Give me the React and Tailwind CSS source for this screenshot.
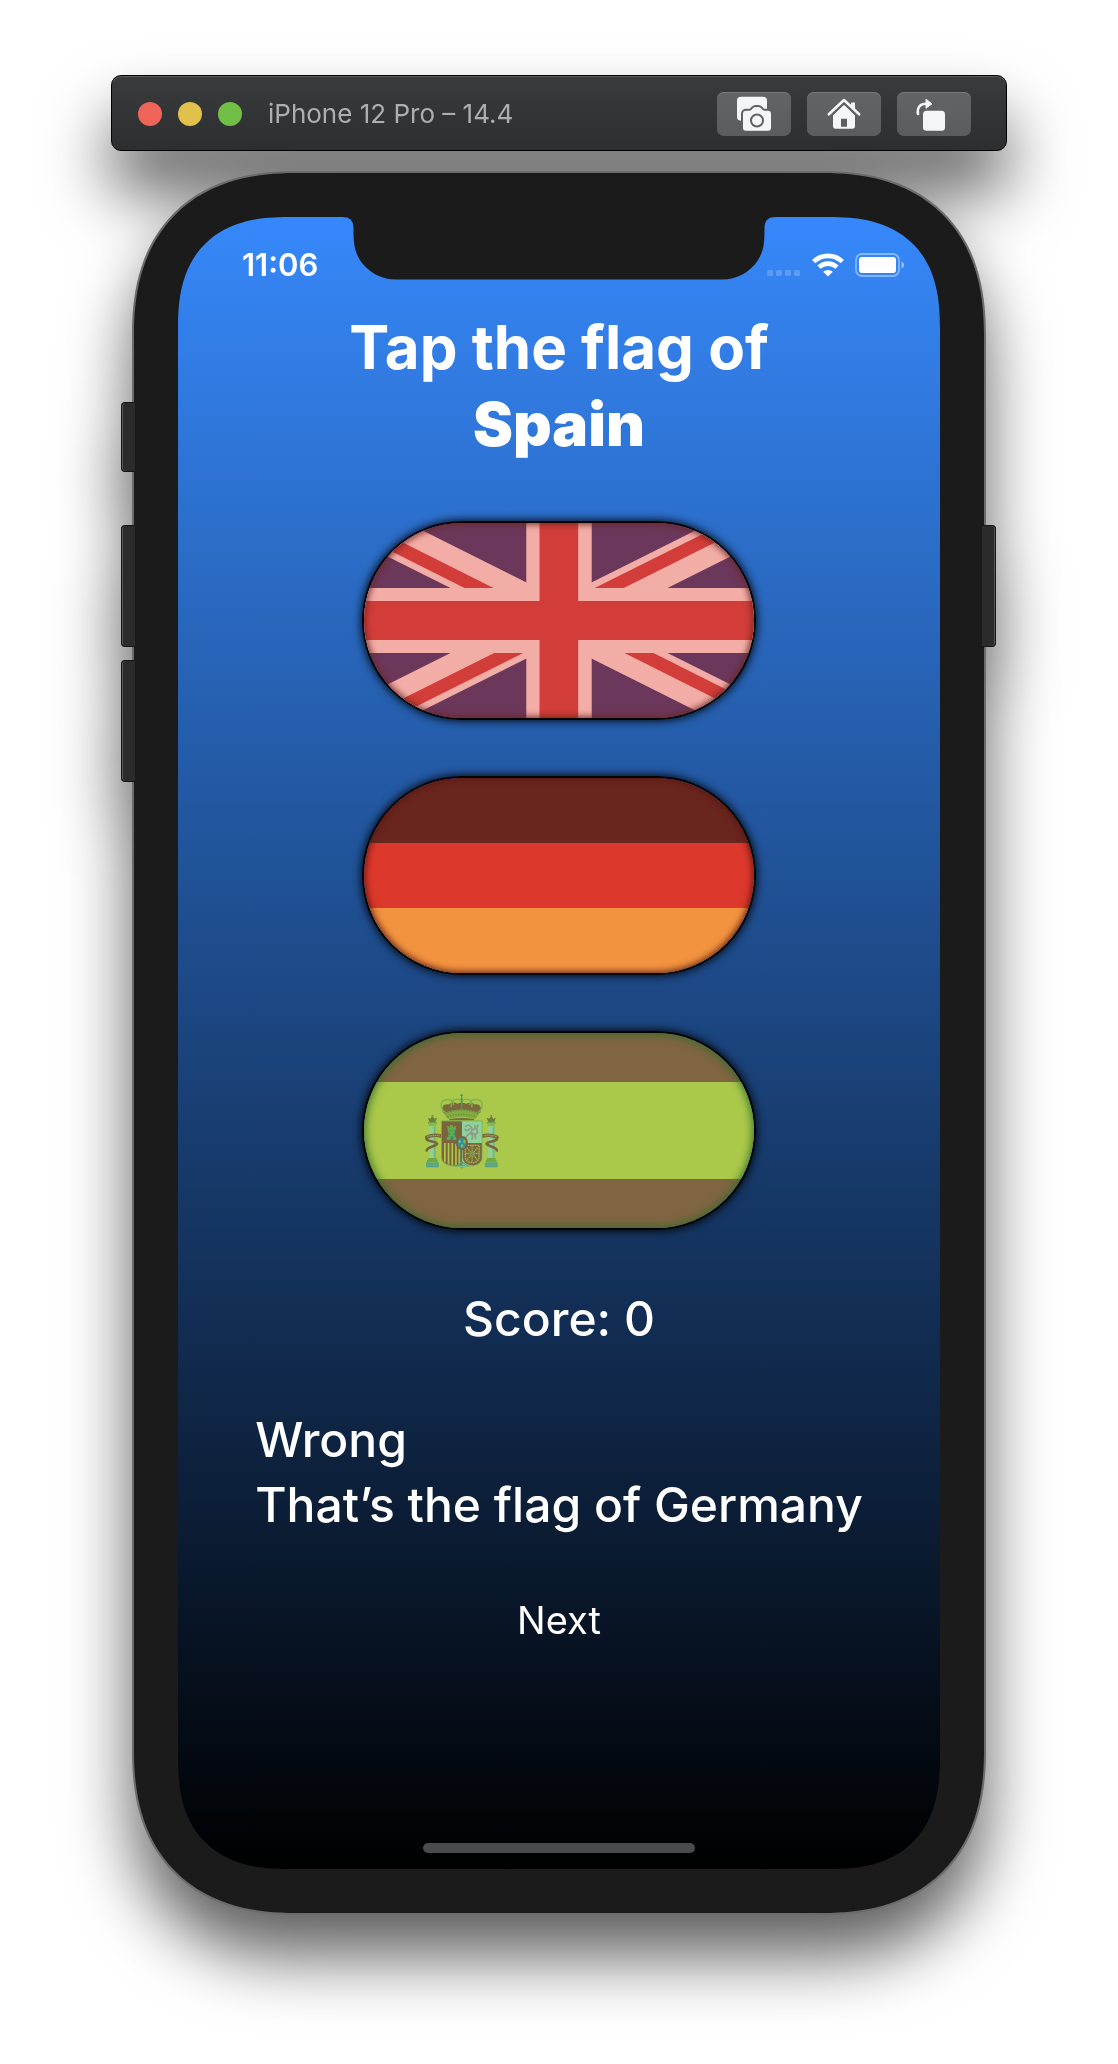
const CAMERA_BODY =
  "M10 14.700h3.500c1 0 1.500-.4 2.200-1.100l1.400-1.500c.8-.8 1.400-1.200 2.600-1.200h2.600c1.200 0 1.800.4 2.600 1.200l1.400 1.500c.7.700 1.200 1.100 2.200 1.100H32a3 3 0 0 1 3 3v14a3 3 0 0 1-3 3H10a3 3 0 0 1-3-3v-14a3 3 0 0 1 3-3z";

function CameraIcon() {
  return (
    <svg width="36" height="36" viewBox="0 0 36 36" aria-hidden="true">
      <path fill="#f4f5f6" d="M5 .7h22a4 4 0 0 1 4 4V20H6v4.700c-3 0-5-1-5-4v-16a4 4 0 0 1 4-4z" />
      <path fill="#606163" stroke="#606163" strokeWidth="4" d={CAMERA_BODY} />
      <path fill="#f4f5f6" d={CAMERA_BODY} />
      <circle cx="21" cy="24.500" r="6" fill="none" stroke="#606163" strokeWidth="2" />
    </svg>
  );
}

function HomeIcon() {
  return (
    <svg width="36" height="36" viewBox="0 0 36 36" aria-hidden="true">
      <path
        fill="#f4f5f6"
        fillRule="evenodd"
        d="M18 8.500 29 19v11a2.700 2.700 0 0 1-2.700 2.700H9.700A2.700 2.700 0 0 1 7 30V19zM15 22.700v8h6v-8z"
      />
      <path
        fill="none"
        stroke="#606163"
        strokeWidth="1.600"
        d="M4.500 20.500 18 7.600l13.500 12.900"
      />
      <path
        fill="none"
        stroke="#f4f5f6"
        strokeWidth="2.600"
        strokeLinecap="round"
        strokeLinejoin="round"
        d="M2.800 18.300 18 4l15.200 14.300"
      />
      <path fill="#f4f5f6" d="M25 6.500h4v8l-4-4z" />
    </svg>
  );
}

function RotateIcon() {
  return (
    <svg width="36" height="36" viewBox="0 0 36 36" aria-hidden="true">
      <rect x="7" y="14.700" width="22" height="20" rx="3.500" fill="#f4f5f6" />
      <path
        fill="none"
        stroke="#f4f5f6"
        strokeWidth="2.600"
        strokeLinecap="round"
        d="M2 18C.8 11.500 4 7.800 10 7.800"
      />
      <path fill="#f4f5f6" stroke="#f4f5f6" strokeLinejoin="round" d="M10 3.300v9l6-4.500z" />
    </svg>
  );
}

function ToolbarButton({ label, children }) {
  return (
    <button
      type="button"
      aria-label={label}
      className="flex h-11 w-[74px] cursor-pointer items-center justify-center rounded-[7px] bg-linear-to-b from-[#636466] to-[#5b5c5e] shadow-[inset_0_1px_0_#77787a]"
    >
      {children}
    </button>
  );
}

function TitleBar() {
  return (
    <header className="flex h-[76px] items-center rounded-[10px] border border-black bg-linear-to-b from-[#3a3b3d] to-[#2d2e30] pt-0.5 pr-[35px] pl-[26px] shadow-[inset_0_1px_0_#5b5d5e]">
      <div className="flex gap-4">
        <button type="button" aria-label="Close" className="size-6 rounded-full bg-[#ee6459]" />
        <button type="button" aria-label="Minimize" className="size-6 rounded-full bg-[#e1c04c]" />
        <button type="button" aria-label="Zoom" className="size-6 rounded-full bg-[#71bf46]" />
      </div>
      <h1 className="ml-[26px] text-[26px] leading-8 whitespace-nowrap text-[#adaeb0]">
        iPhone 12 Pro – 14.4
      </h1>
      <div className="ml-auto flex gap-4">
        <ToolbarButton label="Screenshot">
          <CameraIcon />
        </ToolbarButton>
        <ToolbarButton label="Home">
          <HomeIcon />
        </ToolbarButton>
        <ToolbarButton label="Rotate">
          <RotateIcon />
        </ToolbarButton>
      </div>
    </header>
  );
}

function Notch() {
  return (
    <svg
      className="absolute top-0 left-1/2 -translate-x-1/2"
      width="434"
      height="63"
      viewBox="0 0 434 63"
      aria-hidden="true"
    >
      <path
        fill="#1b1b1b"
        d="M0 0C8 0 11.500 3 11.500 12c0 13 .5 22 7 32 8 11 20 18.500 36 18.500h325c16 0 28-7.500 36-18.500 6.500-10 7-19 7-32C422.500 3 426 0 434 0z"
      />
    </svg>
  );
}

function StatusBar() {
  return (
    <div className="flex items-center justify-between pt-7 pr-[35px] pl-16">
      <time className="text-[31px] leading-10 font-semibold">11:06</time>
      <div className="flex items-center gap-[11px]">
        <svg width="34" height="24" viewBox="0 0 34 24" aria-hidden="true">
          <g fill="#fff" opacity="0.2">
            <rect x="0" y="17" width="6" height="6" rx="1.500" />
            <rect x="9" y="17" width="6" height="6" rx="1.500" />
            <rect x="18" y="17" width="6" height="6" rx="1.500" />
            <rect x="27" y="17" width="6" height="6" rx="1.500" />
          </g>
        </svg>
        <svg width="32" height="24" viewBox="0 0 32 24" aria-hidden="true">
          <g fill="none" stroke="#fff" strokeWidth="4.600">
            <path d="M1.700 8.700a20.500 20.500 0 0 1 28.600 0" />
            <path d="M7 14.200a13 13 0 0 1 18 0" />
          </g>
          <path fill="#fff" d="M11.200 18.800a7 7 0 0 1 9.600 0L16 23.600z" />
        </svg>
        <svg width="50" height="24" viewBox="0 0 50 24" aria-hidden="true">
          <rect
            x="1"
            y="1"
            width="43"
            height="22"
            rx="6"
            fill="none"
            stroke="#fff"
            strokeWidth="1.800"
            opacity="0.4"
          />
          <rect x="4" y="4" width="37" height="16" rx="3" fill="#fff" />
          <path fill="#fff" opacity="0.5" d="M46.500 8.500c3.300 1.500 3.300 5.500 0 7z" />
        </svg>
      </div>
    </div>
  );
}

function UnionJack() {
  return (
    <svg className="block size-full" viewBox="0 0 1180 590" preserveAspectRatio="none" aria-hidden="true">
      <rect width="1180" height="590" fill="#6b385c" />
      <path stroke="#f3ada7" strokeWidth="118" d="M0 0l1180 590M1180 0 0 590" />
      <g fill="#d23d39">
        <path d="M0 0 392 197h-88L-88 0z" />
        <path d="M1180 0h-88L698 197h88z" />
        <path d="M0 590h88l394-197h-88z" />
        <path d="M1180 590h88L876 393h-88z" />
      </g>
      <path fill="#f3ada7" d="M491 0h198v197h491v196H689v197H491V393H0V197h491z" />
      <path fill="#d23d39" d="M531 0h117v236h532v118H648v236H531V354H0V236h531z" />
    </svg>
  );
}

function GermanFlag() {
  return (
    <span className="grid h-full grid-rows-3">
      <span className="bg-[#69261f]" />
      <span className="bg-[#dc392c]" />
      <span className="bg-[#f1933f]" />
    </span>
  );
}

function Pillar({ x }) {
  return (
    <g transform={`translate(${x} 0)`}>
      <path fill="#6f7a3b" d="M-13 322c3-2 5 1 7 3 1-4 3-6 6-8 3 2 5 4 6 8 2-2 4-5 7-3l-4 11H-9z" />
      <circle cy="315" r="3" fill="#5c9a50" />
      <rect x="-13" y="333" width="26" height="5" fill="#6da04a" />
      <rect x="-11" y="338" width="22" height="8" fill="#8cb845" />
      <rect x="-10" y="346" width="20" height="94" fill="#8fd095" />
      <rect x="4" y="346" width="6" height="94" fill="#76ba78" />
      <path fill="#74a63f" d="M-13 440h26v6h3v7h-32v-7h3z" />
      <rect x="-19" y="453" width="38" height="15" fill="#6fb578" />
      <path stroke="#43928a" strokeWidth="2" d="M-19 456h38M-19 461h38M-19 466h38" />
    </g>
  );
}

function SpanishArms() {
  return (
    <svg className="absolute top-[30%] left-[15%] w-[20%]" viewBox="250 244 232 230" aria-hidden="true">
      <Pillar x={278} />
      <Pillar x={453} />
      <g fill="none" stroke="#7a653c" strokeLinecap="round" strokeLinejoin="round">
        <path strokeWidth="11" d="M261 379c13-7 27-8 43-4" />
        <path strokeWidth="8" d="M261 385c8 7 28 6 31 13 2 6-31 10-31 20" />
        <path strokeWidth="11" d="M470 379c-13-7-27-8-43-4" />
        <path strokeWidth="8" d="M470 385c-8 7-28 6-31 13-2 6 31 10 31 20" />
      </g>
      <path stroke="#a6bd4b" strokeWidth="4" strokeDasharray="3 3" fill="none" d="M263 377q18-6 37-3M468 377q-18-6-37-3" />

      <path fill="#7b683b" d="M310 306c-8-18 2-28 16-25 9-8 20-6 26-2 8-4 18-4 26 0 8-4 20-5 26 2 14-3 23 8 16 25l-8 3-94 1z" />
      <g fill="none" stroke="#7fb352" strokeWidth="4">
        <path d="M318 306c-20-14-18-36 0-39 15-3 22 5 24 15" />
        <path d="M334 290c-3-14 3-24 15-25 9 0 15 5 16 12" />
        <path d="M365 277c1-7 7-12 16-12 12 1 17 11 14 25" />
        <path d="M388 282c2-10 9-18 24-15 18 3 20 25 0 39" />
        <path stroke="#4c9a63" d="M365 250v48M361 254h8M361 266h8" />
      </g>
      <path fill="#86ab3e" d="M312 308c28-16 78-16 106 0l-12 16c-25-7-57-7-82 0z" />
      <path fill="none" stroke="#4f8b45" strokeWidth="3" strokeDasharray="4 4" d="M316 308c30-13 68-13 98 0M322 317c28-8 58-8 86 0" />
      <path fill="#756e38" d="M328 324c24-4 50-4 74 0v4h-74z" />

      <path fill="#8fd39b" stroke="#71a65a" strokeWidth="2" d="M305 330h121v108c0 17-18 26-34 26-12 0-21 1-26 7-6-6-14-7-26-7-18 0-35-9-35-26z" />
      <path fill="#7a643e" d="M306 331h60v65h-60z" />
      <path fill="#68a747" d="M321 387v-9h4v-16l-3-11v-6h5v4h4v-7h8v7h4v-4h5v6l-3 11v16h4v9z" />
      <path fill="#2c8b92" d="M332 387v-8q4-7 8 0v8zM326 365h4v7h-4zM342 365h4v7h-4z" />
      <path fill="none" stroke="#4f9560" strokeWidth="2" d="M326 359h20M325 376h22" />
      <path
        fill="none"
        stroke="#8c9c89"
        strokeWidth="5"
        strokeLinecap="round"
        strokeLinejoin="round"
        d="M377 346l8-4 8 5 3 9-5 11 7 5-2 12M391 366l-10 7-4 8M389 354l-9 5-5-4M397 366l9 5 4-6M397 357l7-4 1-9M405 372l8-8-4-9 4-12M405 372l1 9"
      />
      <path fill="#7b663c" d="M306 396h60v66c-28 3-60 0-60-24z" />
      <path stroke="#adc548" strokeWidth="5" d="M315 396v57M326 396v63M337 396v65M348 398v63M358 410v51" />
      <path fill="#7b683c" d="M368 396h57v42c0 32-57 32-57 0z" />
      <g fill="none" stroke="#9db74a" strokeWidth="4">
        <path strokeDasharray="5 2" d="M376 403h41v34c0 23-41 23-41 0z" />
        <path strokeDasharray="4 2" d="M396 405v48M376 427h41M381 410l31 36M412 410l-31 36" />
      </g>
      <circle cx="396" cy="427" r="5" fill="#69a44b" />
      <path fill="none" stroke="#54a378" strokeWidth="3" d="M345 466c10-6 14-7 21-15 7 8 12 9 20 15M366 451v20M356 462h20" />
      <ellipse cx="366" cy="396" rx="18" ry="21" fill="#7b633e" />
      <ellipse cx="366" cy="396" rx="13" ry="16" fill="#32919a" />
      <path fill="#96bd50" d="M359 385l4 6-4 6-4-6zM373 385l4 6-4 6-4-6zM366 398l4 6-4 6-4-6z" />
    </svg>
  );
}

function SpanishFlag() {
  return (
    <span className="relative grid h-full grid-rows-[1fr_2fr_1fr]">
      <span className="bg-[#7f6542]" />
      <span className="bg-[#aac84a]" />
      <span className="bg-[#7f6542]" />
      <SpanishArms />
    </span>
  );
}

function FlagButton({ label, rim, children }) {
  return (
    <button
      type="button"
      aria-label={label}
      className="block w-full max-w-[394px] cursor-pointer rounded-full border-2 border-black shadow-[0_0_8px_1px_rgba(0,0,0,0.9)]"
    >
      <span className="relative block aspect-[2/1] overflow-hidden rounded-full">
        {children}
        <span className={`absolute inset-0 rounded-full ${rim}`} />
      </span>
    </button>
  );
}

function SideButton({ className }) {
  return <span className={`absolute w-[14px] border-[#151515] bg-[#2b2b2b] ${className}`} />;
}

const LEFT_KEY = "-left-[11px] rounded-l-[4px] border-y border-l shadow-[inset_1px_0_0_#585858]";
const RIGHT_KEY = "-right-[10px] rounded-r-[4px] border-y border-r shadow-[inset_-1px_0_0_#585858]";

function Screen() {
  return (
    <main className="relative flex flex-1 flex-col overflow-hidden rounded-[112px] bg-linear-to-b/srgb from-[#3688fa] to-black text-white [corner-shape:superellipse(1.33)]">
      <Notch />
      <StatusBar />
      <h2 className="mt-6 text-center text-[60px] leading-[77px] font-bold">
        Tap the flag of
        <br />
        <span className="font-black">Spain</span>
      </h2>
      <div className="mt-[58px] flex flex-col items-center gap-14">
        <FlagButton label="United Kingdom" rim="shadow-[inset_0_0_7px_1px_#6b241f]">
          <UnionJack />
        </FlagButton>
        <FlagButton label="Germany" rim="shadow-[inset_0_0_7px_1px_#5a1510]">
          <GermanFlag />
        </FlagButton>
        <FlagButton label="Spain" rim="shadow-[inset_0_0_8px_1px_#2f6b2c]">
          <SpanishFlag />
        </FlagButton>
      </div>
      <p className="mt-14 text-center text-5xl leading-[65px] font-medium">Score: 0</p>
      <p className="mx-auto mt-14 text-5xl leading-[65px] font-medium whitespace-nowrap">
        Wrong
        <br />
        That’s the flag of Germany
      </p>
      <button type="button" className="mx-auto mt-[58px] cursor-pointer text-[38px] leading-[50px]">
        Next
      </button>
      <span className="mx-auto mt-auto mb-4 h-[10px] w-[272px] rounded-full bg-[#4b4b4b]" />
    </main>
  );
}

export default function App() {
  return (
    <div className="flex min-h-screen justify-center bg-white px-6 pt-[75px] pb-[149px] font-['Inter',sans-serif]">
      <div className="flex w-full max-w-[896px] flex-col gap-5 drop-shadow-[0_42px_33px_rgba(0,0,0,0.62)]">
        <TitleBar />
        <div className="relative mx-auto flex w-full max-w-[854px] flex-1">
          <div className="relative flex w-full flex-col rounded-[165px] border-2 border-[#6c6c6c] bg-[#1b1b1b] p-11 [corner-shape:superellipse(1.24)]">
            <Screen />
          </div>
          <SideButton className={`top-[231px] h-[70px] ${LEFT_KEY}`} />
          <SideButton className={`top-[354px] h-[122px] ${LEFT_KEY}`} />
          <SideButton className={`top-[489px] h-[122px] ${LEFT_KEY}`} />
          <SideButton className={`top-[354px] h-[122px] ${RIGHT_KEY}`} />
        </div>
      </div>
    </div>
  );
}
